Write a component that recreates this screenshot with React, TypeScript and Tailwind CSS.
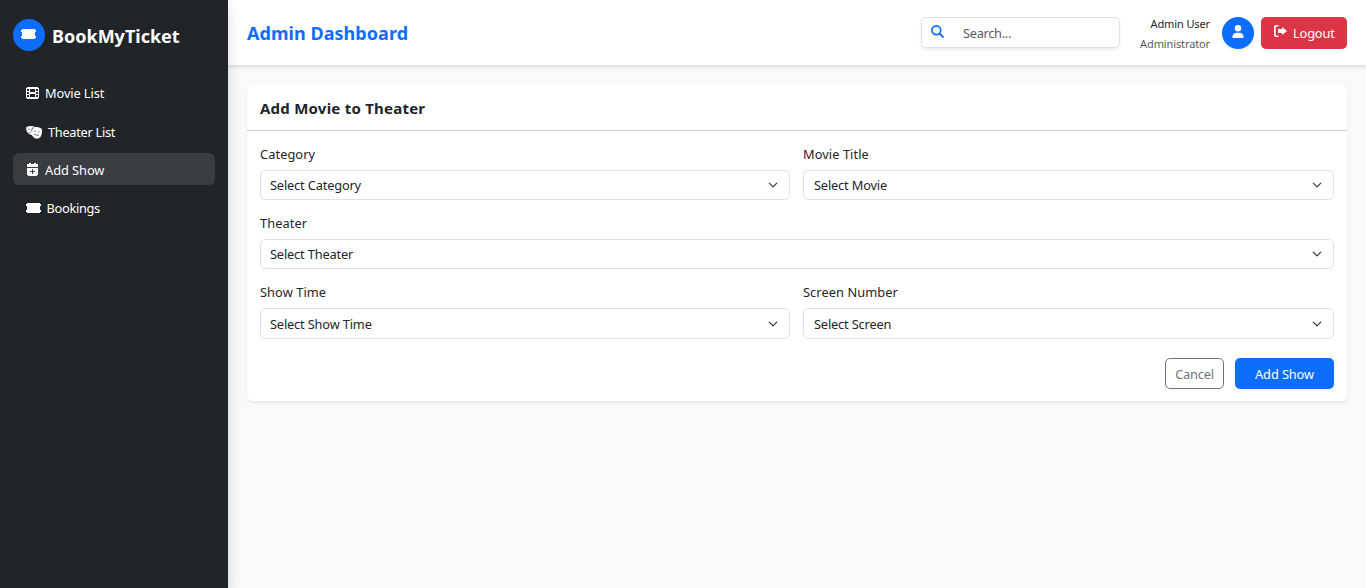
import type { ReactNode } from "react";
import { FaUser } from "react-icons/fa6";

function TicketIcon({ className = "" }: { className?: string }) {
  return (
    <svg className={"h-[10px] w-[15px] " + className} viewBox="0 0 15 10" fill="currentColor" shapeRendering="crispEdges">
      <path d="M1 0h13v1h1v2h-1v4h1v2h-1v1H1V9H0V7h1V3H0V1h1z" />
    </svg>
  );
}

function FilmIcon() {
  return (
    <svg className="h-3 w-[13px]" viewBox="0 0 13 12" fill="currentColor" fillRule="evenodd" shapeRendering="crispEdges">
      <path d="M1 0h11v1h1v10h-1v1H1v-1H0V1h1zM1 2v2h2V2zM1 5v2h2V5zM1 8v2h2V8zM4 2v3h5V2zM4 7v3h5V7zM10 2v2h2V2zM10 5v2h2V5zM10 8v2h2V8z" />
    </svg>
  );
}

function CalendarIcon() {
  return (
    <svg className="mt-px h-[13px] w-[13px]" viewBox="0 0 13 13" fill="currentColor" fillRule="evenodd" shapeRendering="crispEdges">
      <path d="M3 0h2v1h3V0h2v1h2v3H1V1h2zM1 5h11v7h-1v1H2v-1H1zM6 6v2H4v1h2v2h1V9h2V8H7V6z" />
    </svg>
  );
}

function MasksIcon() {
  return (
    <svg className="mt-0.5 h-[13px] w-4" viewBox="0 0 16 13">
      <path fill="#fff" d="M0 1.400C2.800-.2 6.300-.3 9 1.100c2.300-.2 4.900.5 6.800 1.800.4 3.300 0 6.100-1.400 8.200-1.500 1.900-4 2.200-6 .9-1.200-.8-2-1.800-2.500-2.900-2.700-.3-5.300-3-5.700-5.800z" />
      <path fill="none" stroke="#212529" strokeWidth=".7" d="M8 1.500 6 2.500l-.3 3M2.500 3.700l1.500-.5M3.200 6.800l1.600-.6M8.200 5.100l1.500.2M12.200 5.800l1.300.3M8 7.900q2.300 2.300 5 1" />
    </svg>
  );
}

function SearchIcon() {
  return (
    <svg className="mb-[3px] size-[13px] text-[#0d6efd]" viewBox="0 0 13 13" fill="none" stroke="currentColor">
      <circle cx="5.300" cy="5.300" r="4.400" strokeWidth="1.700" />
      <path d="m8.500 8.500 4 4" strokeWidth="1.800" />
    </svg>
  );
}

function LogoutIcon() {
  return (
    <svg className="mb-[3px] h-3 w-[13px]" viewBox="0 0 13 12" fill="currentColor">
      <path d="M4.500 0v1.500H1.700v9h2.800V12H1.500L0 10.700V1.300L1.500 0zM8 2l5 4-5 4V8H4V4h4z" />
    </svg>
  );
}

function NavItem({ icon, children, active }: { icon: ReactNode; children: ReactNode; active?: boolean }) {
  return (
    <a
      className={
        "flex h-8 items-center rounded-md pl-[13px] text-[12.8px] text-white " +
        (active ? "bg-[#393c40]" : "")
      }
    >
      {icon}
      {children}
    </a>
  );
}

function SelectField({ label, value, tall, right }: { label: string; value: string; tall?: boolean; right?: boolean }) {
  return (
    <div>
      <div className="h-[23px] text-[12.8px] leading-[15px] tracking-[0.08px]">{label}</div>
      <div
        className={
          "flex items-center justify-between rounded-[5px] border border-[#dee2e6] pr-[11px] text-[12.8px] " +
          (tall ? "h-[31px] " : "h-[30px] ") +
          (right ? "pl-[10px]" : "pl-[9px]")
        }
      >
        <span className="leading-5 tracking-[-0.16px]">{value}</span>
        <svg width="10" height="10" viewBox="0 0 16 16" fill="none" stroke="#343a40" strokeWidth="2" strokeLinecap="round" strokeLinejoin="round">
          <path d="m2 5 6 6 6-6" />
        </svg>
      </div>
    </div>
  );
}

export default function App() {
  return (
    <div className="flex h-[588px] w-full bg-[#f8f9fa] font-['Noto_Sans','Open_Sans',sans-serif] text-[#212529]">
      <aside className="z-20 w-[228px] shrink-0 bg-[#212529] px-[13px] pt-[19px] shadow-[0_6px_13px_rgba(0,0,0,0.15)]">
        <div className="flex h-8 items-center text-white">
          <span className="flex size-8 items-center justify-center rounded-full bg-[#0d6efd]">
            <TicketIcon className="mr-px mb-0.5" />
          </span>
          <span className="ml-[7px] pt-0.5 text-[18px] leading-6 font-bold">BookMyTicket</span>
        </div>
        <nav className="mt-[26px] flex w-[202px] flex-col gap-1.5">
          <NavItem icon={<FilmIcon />}>
            <span className="ml-1.5 leading-5 tracking-[-0.1px]">Movie List</span>
          </NavItem>
          <NavItem icon={<MasksIcon />}>
            <span className="ml-1.5 pt-0.5 leading-5 tracking-[-0.3px]">Theater List</span>
          </NavItem>
          <NavItem icon={<CalendarIcon />} active>
            <span className="ml-1.5 pt-0.5 leading-5 tracking-[-0.05px]">Add Show</span>
          </NavItem>
          <NavItem icon={<TicketIcon className="mt-px" />}>
            <span className="ml-[5.500px] pt-0.5 leading-5 tracking-[-0.3px]">Bookings</span>
          </NavItem>
        </nav>
      </aside>
      <div className="min-w-0 flex-1">
        <header className="relative z-10 flex h-[66px] items-center border-b border-[#dee2e6] bg-white px-[19px] shadow-[0_2px_3px_rgba(0,0,0,0.075)]">
          <h1 className="text-[18px] leading-6 font-bold tracking-[0.05px] text-[#0d6efd]">Admin Dashboard</h1>
          <div className="ml-auto flex h-[31px] w-[199px] items-center rounded-[5px] border border-[#dee2e6] pl-[9px] shadow-[0_2px_3px_rgba(0,0,0,0.075)]">
            <SearchIcon />
            <span className="ml-[19px] pt-px text-[12.8px] leading-5 tracking-[-0.3px] text-[#595c5f]">Search...</span>
          </div>
          <div className="ml-5 w-[70px] pt-[2px] text-right text-[11px] leading-5 tracking-[-0.12px] whitespace-nowrap">
            <div>Admin User</div>
            <div className="text-[#595c5f]">Administrator</div>
          </div>
          <span className="ml-3 flex size-8 items-center justify-center rounded-full bg-[#0d6efd] text-white shadow-[0_2px_3px_rgba(0,0,0,0.075)]">
            <FaUser className="mb-[3px] h-[13px] w-3" />
          </span>
          <button className="ml-[7px] flex h-8 w-[86px] items-center rounded-[5px] bg-[#dc3545] pl-[13px] text-[12.8px] text-white">
            <LogoutIcon />
            <span className="ml-[6px] pt-px leading-5 tracking-[-0.15px]">Logout</span>
          </button>
        </header>
        <main className="px-[19px] pt-[19px]">
          <section className="h-[316px] rounded-md bg-white shadow-[0_2px_3px_rgba(0,0,0,0.075)]">
            <div className="h-[46px] border-b border-[#d2d3d3] pt-[11px] pl-[13px]">
              <h2 className="text-[15px] leading-6 font-bold tracking-[0.23px]">Add Movie to Theater</h2>
            </div>
            <div className="px-[13px] pt-4">
              <div className="grid h-[69px] grid-cols-[530px_531px] gap-[13px]">
                <SelectField label="Category" value="Select Category" />
                <SelectField label="Movie Title" value="Select Movie" right />
              </div>
              <div className="h-[69px]">
                <SelectField label="Theater" value="Select Theater" />
              </div>
              <div className="grid grid-cols-[530px_531px] gap-[13px]">
                <SelectField label="Show Time" value="Select Show Time" tall />
                <SelectField label="Screen Number" value="Select Screen" tall right />
              </div>
              <div className="mt-[19px] flex justify-end gap-[11px] text-[12.8px] tracking-[-0.1px]">
                <button className="h-[31px] w-[59px] rounded-[5px] border border-[#6c757d] pt-0.5 tracking-[-0.2px] text-[#6c757d]">Cancel</button>
                <button className="h-[31px] w-[99px] rounded-[5px] bg-[#0d6efd] pt-0.5 text-white">Add Show</button>
              </div>
            </div>
          </section>
        </main>
      </div>
    </div>
  );
}
